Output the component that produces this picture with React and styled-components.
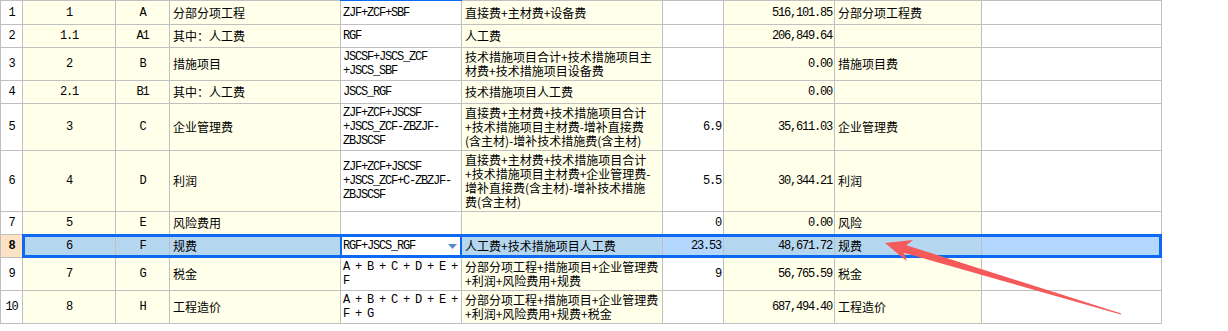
import React from 'react';
import styled, { createGlobalStyle, css } from 'styled-components';

const YELLOW = '#ffffea';
const WHITE = '#ffffff';
const LINE = '#c0c0c0';
const BLUE = '#0d69f2';
const SEL_ON_YELLOW = '#b5d6ef';
const SEL_ON_WHITE = '#b3d7fe';

const columns = [
  { key: 'seq', w: 92, tint: 'yellow', align: 'center', font: 'mono' },
  { key: 'code', w: 53, tint: 'yellow', align: 'center', font: 'mono' },
  { key: 'name', w: 170, tint: 'yellow', align: 'left', font: 'cjk' },
  { key: 'formula', w: 120, tint: 'white', align: 'left', font: 'mono' },
  { key: 'desc', w: 200, tint: 'yellow', align: 'left', font: 'cjk' },
  { key: 'rate', w: 60, tint: 'white', align: 'right', font: 'mono' },
  { key: 'amount', w: 110, tint: 'yellow', align: 'right', font: 'mono' },
  { key: 'type', w: 146, tint: 'yellow', align: 'left', font: 'cjk' },
  { key: 'note', w: 179, tint: 'white', align: 'left', font: 'cjk' },
];

const rows = [
  {
    h: 23, seq: '1', code: 'A', name: '分部分项工程',
    formula: ['ZJF+ZCF+SBF'], desc: ['直接费+主材费+设备费'],
    rate: '', amount: '516,101.85', type: '分部分项工程费', topMark: true,
  },
  {
    h: 22, seq: '1.1', code: 'A1', name: '其中：人工费',
    formula: ['RGF'], desc: ['人工费'], rate: '', amount: '206,849.64', type: '',
  },
  {
    h: 32, seq: '2', code: 'B', name: '措施项目',
    formula: ['JSCSF+JSCS_ZCF', '+JSCS_SBF'],
    desc: ['技术措施项目合计+技术措施项目主', '材费+技术措施项目设备费'],
    rate: '', amount: '0.00', type: '措施项目费',
  },
  {
    h: 22, seq: '2.1', code: 'B1', name: '其中：人工费',
    formula: ['JSCS_RGF'], desc: ['技术措施项目人工费'], rate: '', amount: '0.00', type: '',
  },
  {
    h: 46, seq: '3', code: 'C', name: '企业管理费',
    formula: ['ZJF+ZCF+JSCSF', '+JSCS_ZCF-ZBZJF-', 'ZBJSCSF'],
    desc: ['直接费+主材费+技术措施项目合计', '+技术措施项目主材费-增补直接费', '(含主材)-增补技术措施费(含主材)'],
    rate: '6.9', amount: '35,611.03', type: '企业管理费',
  },
  {
    h: 60, seq: '4', code: 'D', name: '利润',
    formula: ['ZJF+ZCF+JSCSF', '+JSCS_ZCF+C-ZBZJF-', 'ZBJSCSF'],
    desc: ['直接费+主材费+技术措施项目合计', '+技术措施项目主材费+企业管理费-', '增补直接费(含主材)-增补技术措施', '费(含主材)'],
    rate: '5.5', amount: '30,344.21', type: '利润',
  },
  {
    h: 22, seq: '5', code: 'E', name: '风险费用',
    formula: [], desc: [], rate: '0', amount: '0.00', type: '风险',
  },
  {
    h: 22, seq: '6', code: 'F', name: '规费',
    formula: ['RGF+JSCS_RGF'], desc: ['人工费+技术措施项目人工费'],
    rate: '23.53', amount: '48,671.72', type: '规费', selected: true,
  },
  {
    h: 32, seq: '7', code: 'G', name: '税金',
    formula: ['A + B + C + D + E +', 'F'],
    desc: ['分部分项工程+措施项目+企业管理费', '+利润+风险费用+规费'],
    rate: '9', amount: '56,765.59', type: '税金',
  },
  {
    h: 32, seq: '8', code: 'H', name: '工程造价',
    formula: ['A + B + C + D + E +', 'F + G'],
    desc: ['分部分项工程+措施项目+企业管理费', '+利润+风险费用+规费+税金'],
    rate: '', amount: '687,494.40', type: '工程造价',
  },
];

const GlobalStyle = createGlobalStyle`
  html, body {
    margin: 0;
    padding: 0;
    background: #ffffff;
  }
`;

const monoFont = css`
  font-family: "Liberation Mono", "DejaVu Sans Mono", monospace;
  font-size: 12px;
  letter-spacing: -1.2px;
`;

const cjkFont = css`
  font-family: "Noto Sans CJK SC", "Noto Sans", sans-serif;
  font-size: 12px;
`;

const Page = styled.div`
  position: relative;
  width: 1228px;
  height: 331px;
  overflow: hidden;
  color: #000;
`;

const Sheet = styled.div`
  display: inline-flex;
  flex-direction: column;
  gap: 1px;
  padding: 1px;
  background: ${LINE};
`;

const Row = styled.div`
  display: flex;
  gap: 1px;
  height: ${(p) => p.$h}px;
`;

const RowHeader = styled.div`
  ${monoFont};
  width: 21px;
  display: flex;
  align-items: center;
  justify-content: center;
  background: ${(p) => (p.$active ? '#fde3c3' : WHITE)};
  font-weight: ${(p) => (p.$active ? 700 : 400)};
`;

const RowBody = styled.div`
  display: flex;
  gap: 1px;
  position: relative;

  ${(p) =>
    p.$selected &&
    css`
      &::after {
        content: '';
        position: absolute;
        inset: -1px;
        border: 3px solid ${BLUE};
        pointer-events: none;
      }
    `}
`;

const cellBg = (p) => {
  if (p.$editing) return WHITE;
  if (p.$selected) return p.$tint === 'yellow' ? SEL_ON_YELLOW : SEL_ON_WHITE;
  return p.$tint === 'yellow' ? YELLOW : WHITE;
};

const Cell = styled.div`
  ${(p) => (p.$font === 'mono' ? monoFont : cjkFont)};
  position: relative;
  box-sizing: border-box;
  width: ${(p) => p.$w}px;
  display: flex;
  align-items: center;
  justify-content: ${(p) =>
    p.$align === 'center' ? 'center' : p.$align === 'right' ? 'flex-end' : 'space-between'};
  padding: ${(p) => (p.$font === 'mono' ? '0 2px 0 2px' : '0 3px 0 3px')};
  background: ${cellBg};
  text-align: ${(p) => p.$align};
  line-height: 14px;
  white-space: nowrap;

  ${(p) =>
    p.$editing &&
    css`
      padding-right: 4px;
      &::after {
        content: '';
        position: absolute;
        top: -1px;
        bottom: -1px;
        left: -1px;
        right: -1px;
        border-left: 2px solid ${BLUE};
        border-right: 2px solid ${BLUE};
        pointer-events: none;
      }
    `}

  ${(p) =>
    p.$topMark &&
    css`
      &::before {
        content: '';
        position: absolute;
        top: -1px;
        left: -1px;
        right: -1px;
        height: 1px;
        background: ${BLUE};
      }
    `}
`;

const Lines = styled.div`
  display: flex;
  flex-direction: column;
`;

const DropArrow = () => (
  <svg width="9" height="5" viewBox="0 0 9 5">
    <polygon points="0,0 9,0 4.5,5" fill="#5b8dc6" />
  </svg>
);

const Annotation = styled.svg`
  position: absolute;
  left: 0;
  top: 0;
  pointer-events: none;
`;

const renderValue = (value) => {
  if (Array.isArray(value)) {
    return (
      <Lines>
        {value.map((line, i) => (
          <span key={i}>{line}</span>
        ))}
      </Lines>
    );
  }
  return <span>{value}</span>;
};

export default function App() {
  return (
    <>
      <GlobalStyle />
      <Page>
        <Sheet>
          {rows.map((row, i) => (
            <Row key={i} $h={row.h}>
              <RowHeader $active={row.selected}>{i + 1}</RowHeader>
              <RowBody $selected={row.selected}>
                {columns.map((col) => {
                  const editing = row.selected && col.key === 'formula';
                  return (
                    <Cell
                      key={col.key}
                      $w={col.w}
                      $tint={col.tint}
                      $align={col.align}
                      $font={col.font}
                      $selected={row.selected}
                      $editing={editing}
                      $topMark={row.topMark && col.key === 'formula'}
                    >
                      {renderValue(row[col.key] ?? '')}
                      {editing && <DropArrow />}
                    </Cell>
                  );
                })}
              </RowBody>
            </Row>
          ))}
        </Sheet>
        <Annotation width="1228" height="331" viewBox="0 0 1228 331">
          <polygon
            points="885,243 913,240 906.3,245.2 1121.2,313.6 1120.8,314.4 903.9,252.8 906.7,261"
            fill="#f45a5a"
          />
        </Annotation>
      </Page>
    </>
  );
}
